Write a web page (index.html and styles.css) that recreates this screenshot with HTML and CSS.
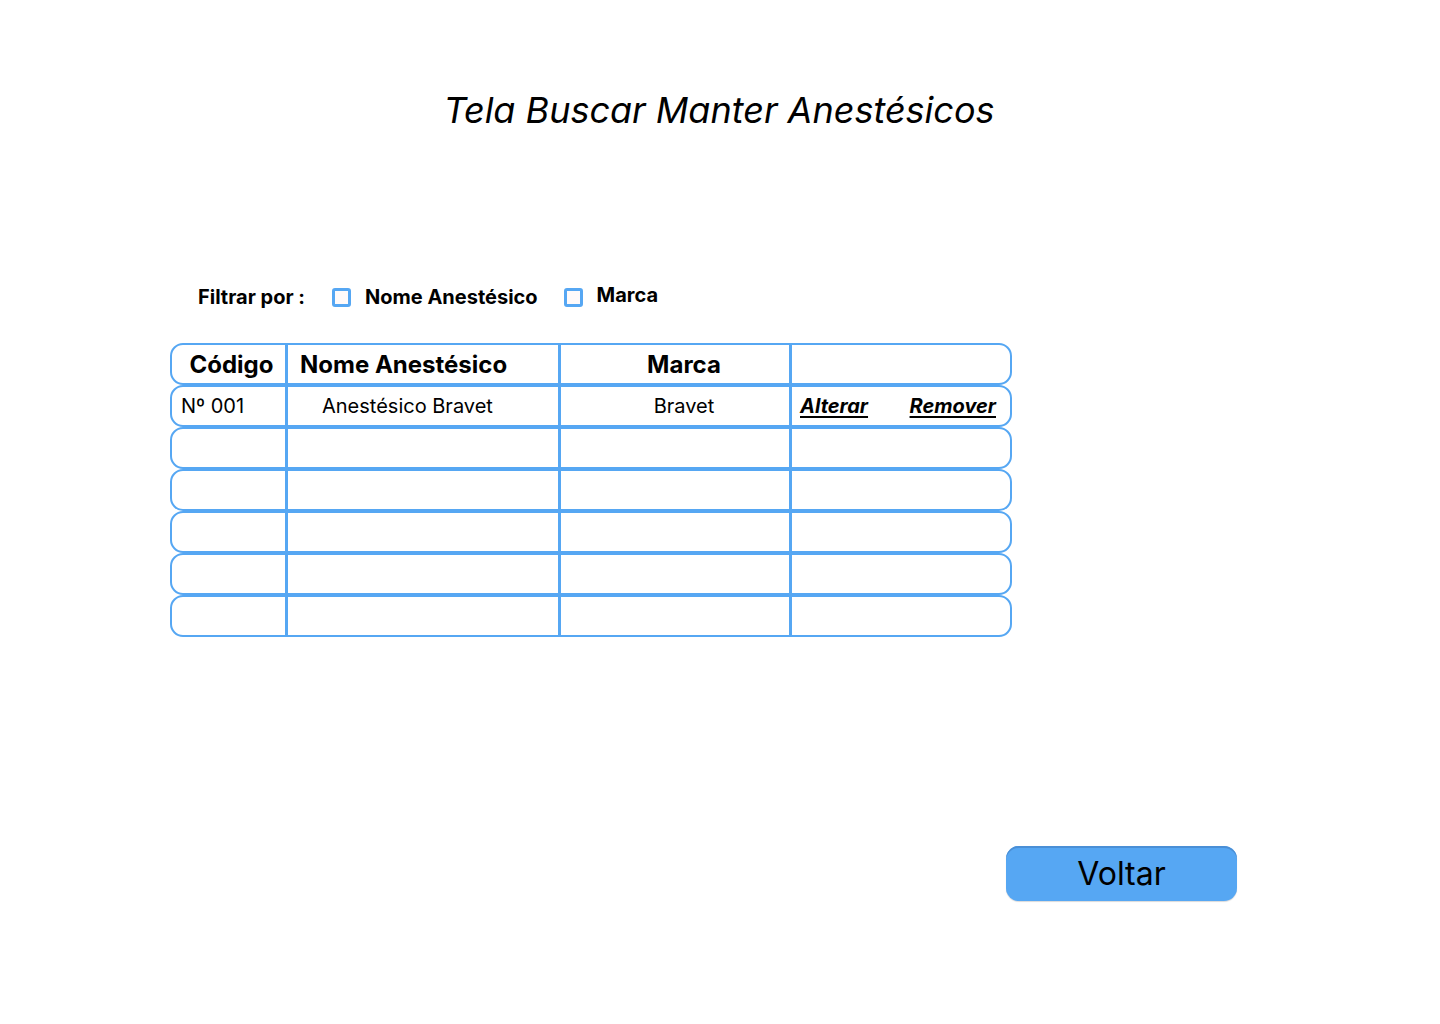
FILE: index.html
```html
<!DOCTYPE html>
<html lang="pt">
<head>
<meta charset="utf-8">
<title>Tela Buscar Manter Anestésicos</title>
<link rel="stylesheet" href="styles.css">
</head>
<body>
<main class="page">
  <h1 class="title">Tela Buscar Manter Anestésicos</h1>

  <div class="filters">
    <span class="filter-label">Filtrar por :</span>
    <label class="filter-opt"><span class="box"></span><span>Nome Anestésico</span></label>
    <label class="filter-opt filter-opt--up"><span class="box"></span><span>Marca</span></label>
  </div>

  <div class="table">
    <div class="row row--head">
      <div class="cell c1 center pad-head-code">Código</div>
      <div class="cell c2 pad-head">Nome Anestésico</div>
      <div class="cell c3 center">Marca</div>
      <div class="cell c4"></div>
    </div>
    <div class="row row--data">
      <div class="cell c1 pad-code">Nº 001</div>
      <div class="cell c2 pad-name">Anestésico Bravet</div>
      <div class="cell c3 center">Bravet</div>
      <div class="cell c4 actions"><a class="act">Alterar</a><a class="act">Remover</a></div>
    </div>
    <div class="row"><div class="cell c1"></div><div class="cell c2"></div><div class="cell c3"></div><div class="cell c4"></div></div>
    <div class="row"><div class="cell c1"></div><div class="cell c2"></div><div class="cell c3"></div><div class="cell c4"></div></div>
    <div class="row"><div class="cell c1"></div><div class="cell c2"></div><div class="cell c3"></div><div class="cell c4"></div></div>
    <div class="row"><div class="cell c1"></div><div class="cell c2"></div><div class="cell c3"></div><div class="cell c4"></div></div>
    <div class="row"><div class="cell c1"></div><div class="cell c2"></div><div class="cell c3"></div><div class="cell c4"></div></div>
  </div>

  <div class="footer">
    <button class="btn">Voltar</button>
  </div>
</main>
</body>
</html>
```

FILE: styles.css
```css
* { box-sizing: border-box; }

html, body {
  margin: 0;
  padding: 0;
  background: #ffffff;
}

body {
  font-family: Inter, "Noto Sans", "Liberation Sans", sans-serif;
  color: #000;
  width: 1440px;
  height: 1024px;
  overflow: hidden;
}

.page {
  display: flex;
  flex-direction: column;
  padding-top: 86px;
}

.title {
  margin: 0;
  text-align: center;
  font-size: 36px;
  font-style: italic;
  font-weight: 400;
  line-height: 48px;
  letter-spacing: 0;
  padding-right: 2px;
}

.filters {
  display: flex;
  align-items: center;
  margin: 151px 0 0 198px;
  height: 24px;
  font-size: 20px;
  font-weight: 700;
}

.filter-label {
  margin-right: 27px;
}

.filter-opt {
  display: flex;
  align-items: center;
  gap: 14px;
  margin-right: 26px;
}

.filter-opt--up span:last-child {
  position: relative;
  top: -2px;
}

.box {
  width: 19px;
  height: 19px;
  border: 3px solid #56a7f3;
  border-radius: 3px;
  background: #fffafa;
  flex: none;
}

.table {
  margin: 34px 0 0 170px;
  width: 842px;
  display: flex;
  flex-direction: column;
}

.row {
  display: flex;
  height: 42px;
  border: 2.5px solid #56a7f3;
  border-radius: 13px;
}

.cell {
  display: flex;
  align-items: center;
  height: 100%;
  font-size: 20px;
}

.c1 { width: 113px; }
.c2 { width: 273px; border-left: 3px solid #56a7f3; }
.c3 { width: 231px; border-left: 3px solid #56a7f3; padding-left: 18px; }
.c4 { flex: 1; border-left: 3px solid #56a7f3; }

.row--head .cell {
  font-size: 24px;
  font-weight: 700;
}

.center { justify-content: center; }

.pad-head-code { padding-left: 6px; }
.pad-head { padding-left: 12px; }
.pad-code { padding-left: 9px; }
.pad-name { padding-left: 34px; }

.actions {
  justify-content: space-between;
  padding: 0 14px 0 8px;
}

.act {
  font-weight: 700;
  font-style: italic;
  text-decoration: underline;
  text-underline-offset: 3px;
  text-decoration-thickness: 2px;
}

.footer {
  display: flex;
  margin: 209px 0 0 1006px;
}

.btn {
  width: 231px;
  height: 55px;
  border: none;
  border-radius: 13px;
  background: #56a7f3;
  box-shadow: inset 0 2px 0 #4a8fd6, 0 1px 1px rgba(0,0,0,0.15);
  font-family: Inter, "Noto Sans", "Liberation Sans", sans-serif;
  font-size: 32px;
  font-weight: 400;
  color: #000;
  padding: 0;
}
```
